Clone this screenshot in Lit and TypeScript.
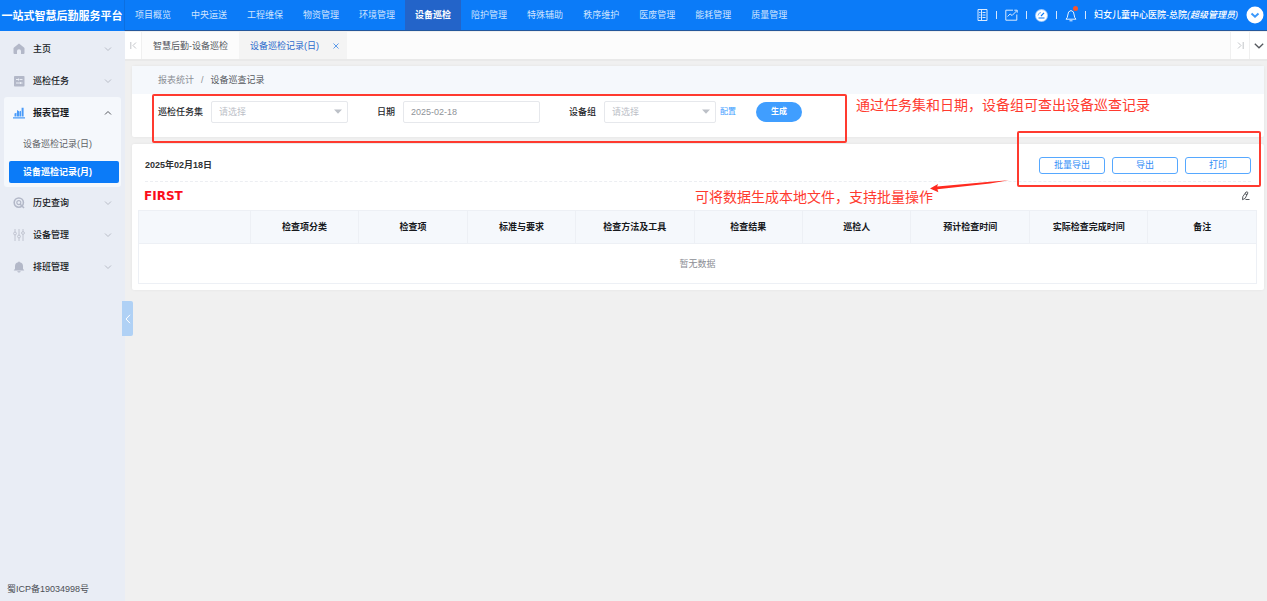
import { LitElement, html, css, svg, TemplateResult } from "lit";
import { customElement, state } from "lit/decorators.js";
import { classMap } from "lit/directives/class-map.js";

type MenuItem = { label: string; icon: string; children?: string[] };

const NAV = [
  "项目概览", "中央运送", "工程维保", "物资管理", "环境管理", "设备巡检",
  "陪护管理", "特殊辅助", "秩序维护", "医废管理", "能耗管理", "质量管理",
];

const MENU: MenuItem[] = [
  { label: "主页", icon: "home" },
  { label: "巡检任务", icon: "task" },
  { label: "报表管理", icon: "report", children: ["设备巡检记录(日)", "设备巡检记录(月)"] },
  { label: "历史查询", icon: "history" },
  { label: "设备管理", icon: "device" },
  { label: "排班管理", icon: "bell" },
];

const COLUMNS = [
  "", "检查项分类", "检查项", "标准与要求", "检查方法及工具",
  "检查结果", "巡检人", "预计检查时间", "实际检查完成时间", "备注",
];
const WIDE = new Set([4, 7, 8]);

const MENU_ICONS: Record<string, TemplateResult> = {
  home: svg`<path fill="#b3b8c8" d="M6 .6 11 4.400q.5.4.5 1V10q0 1-1 1H8V8q0-1.800-2-1.800T4 8v3H1.500q-1 0-1-1V5.400q0-.6.5-1z"/>`,
  task: svg`<rect x="1" y="1" width="10.500" height="10.500" rx=".8" fill="#b3b8c8"/><path stroke="#e9edf5" fill="none" d="M3 4.500h2.500M6.500 4.500h3M3 8h4M8 8h1.500M5.500 3.500v2M7.500 7v2"/>`,
  report: svg`<path fill="#4a9bf8" d="M0 10.200h12v1.200H0zM1.500 6.500l2-.8v3.800h-2zM4 3l2 1.200v5.300H4zM6.400 4.600 8 3.800v5.700H6.400zM8.600.8h2v8.700h-2z"/>`,
  history: svg`<circle cx="5.800" cy="5.600" r="4.600" fill="none" stroke="#b3b8c8" stroke-width="1.600"/><circle cx="5.800" cy="5.600" r="2" fill="none" stroke="#b3b8c8" stroke-width="1.200"/><path stroke="#b3b8c8" stroke-width="1.600" d="m7 7 4 4"/>`,
  device: svg`<g fill="none" stroke="#c0c4d0"><path d="M2 0v3M2 6v6M6 0v6M6 9v3M10 0v2.500M10 5.500V12"/><circle cx="2" cy="4.500" r="1.400"/><circle cx="6" cy="7.500" r="1.400"/><circle cx="10" cy="4" r="1.400"/></g>`,
  bell: svg`<path fill="#b3b8c8" d="M6 .5q.8 0 .8.7 3.200.7 3.200 4v2.600l1.300 1.700H.7L2 7.800V5.200q0-3.300 3.200-4 0-.7.8-.7M4.200 10.200h3.600q-.4 1.300-1.800 1.300t-1.800-1.300"/>`,
};

@customElement("app-root")
export class AppRoot extends LitElement {
  @state() private activeChild = "设备巡检记录(月)";

  static styles = css`
    :host {
      display: grid;
      grid-template: auto 1fr / 125px 1fr;
      min-height: 100vh;
      background: #f0f0f0;
      color: #303133;
      font: 9px/12px "Liberation Sans", "Noto Sans CJK SC", sans-serif;
    }
    * { box-sizing: border-box; }
    button, input, select { font: inherit; color: inherit; margin: 0; }
    button { cursor: pointer; border: 0; background: none; padding: 0; }
    a { text-decoration: none; color: inherit; }
    ul { list-style: none; margin: 0; padding: 0; }
    svg { display: block; flex: none; }

    .brand {
      display: flex; align-items: center; justify-content: center;
      height: 31px; margin: 0;
      background: #0b7bf8; color: #fff;
      font-size: 11px; font-weight: 700; white-space: nowrap;
      border-right: 1px solid #0c6fe0;
    }
    .topbar {
      display: flex; justify-content: space-between; height: 31px;
      background: #0b7bf8; border-bottom: 1px solid #25579b; color: #fff;
    }
    .nav { display: flex; }
    .nav a { display: flex; align-items: center; padding: 0 10px; color: #cfe4fe; white-space: nowrap; }
    .nav a.active { background: #2364c9; color: #fff; font-weight: 700; }
    .tools { display: flex; align-items: center; gap: 8px; padding-right: 3px; white-space: nowrap; }
    .tools .sep { width: 1px; height: 8px; background: #d5e7fe; }
    .user { font-weight: 500; }
    .alert { position: relative; }
    .alert::after {
      content: ""; position: absolute; top: -3px; right: -1px;
      width: 5px; height: 5px; border-radius: 50%; background: #f9552b;
    }

    .sidebar {
      position: relative; display: flex; flex-direction: column; justify-content: space-between;
      background: #e9edf5; padding: 2px 4px 6px;
    }
    .item {
      display: grid; grid-template-columns: 12px 1fr 8px; gap: 8px; align-items: center;
      width: 100%; height: 32px; padding: 0 9px; text-align: left; color: #17191d; font-weight: 500;
    }
    .group { background: #f5f8fc; border-radius: 3px; padding-bottom: 4px; }
    .group .item { font-weight: 700; }
    .children { display: grid; gap: 6px; padding: 4px 2px 0 5px; }
    .child {
      display: flex; align-items: center; height: 22px; padding-left: 14px;
      border-radius: 2px; color: #606266;
    }
    .child.active { background: #0b7bf8; color: #fff; font-weight: 700; }
    .icp { padding-left: 3px; color: #4c4f55; }
    .collapse {
      position: absolute; right: -8px; top: 270px; width: 11px; height: 35px;
      background: #b0d1f5; border-radius: 0 2px 2px 0;
      display: grid; place-items: center;
    }

    .tabs {
      display: flex; height: 29px; margin-top: 1px; background: #fcfcfc;
      border-bottom: 2px solid #e9e9e9; color: #55585e;
    }
    .edge { width: 17px; display: grid; place-items: center; background: #fff; border-right: 1px solid #f0f0f0; }
    .tab { display: flex; align-items: center; gap: 14px; padding: 0 11px; white-space: nowrap; }
    .tab.active { background: #f4f4f4; color: #2a69cc; padding-right: 8px; }
    .spring { flex: 1; border-right: 1px solid #f0f0f0; }
    .edge.next { width: 19px; }
    .edge.more { border-right: 0; }

    .main { min-width: 0; }
    .content { position: relative; display: grid; gap: 7px; padding: 5px 3px 7px 7px; }
    .card { background: #fff; border-radius: 2px; box-shadow: 0 0 3px rgb(0 0 0 / 6%); }
    .crumbs {
      display: flex; align-items: center; gap: 7px; height: 28px; padding-left: 26px;
      background: #f5f8fc; color: #8b8e94;
    }
    .crumbs b { color: #55585e; font-weight: 400; }
    .filters { display: flex; align-items: center; height: 43px; padding: 0 26px 8px; }
    .field { display: flex; align-items: center; gap: 8px; margin-right: 29px; white-space: nowrap; }
    .field label { color: #26282c; font-weight: 500; }
    .field.tight { margin-right: 4px; }
    .control {
      width: 137px; height: 22px; padding: 0 7px; border: 1px solid #e6e8ec; border-radius: 2px;
      background: #fff; color: #8f9399; appearance: none; outline: 0;
    }
    select.control { color: #bcc0c7; }
    .tight .control { width: 112px; }
    .select { display: grid; align-items: center; }
    .select > * { grid-area: 1 / 1; }
    .select svg { justify-self: end; margin-right: 6px; pointer-events: none; }
    .config { color: #409eff; font-size: 8px; margin-right: 20px; }
    .generate {
      width: 46px; height: 20px; border-radius: 10px; background: #409eff; color: #fff;
      font-size: 8px; font-weight: 700;
    }

    .result { padding: 0 7px 6px 6px; }
    .head {
      display: flex; align-items: center; justify-content: space-between;
      height: 38px; margin: 0 6px 0 7px; padding-top: 5px; border-bottom: 1px dashed #eceef2;
    }
    .head h2 { margin: 0; font-size: 9px; font-weight: 700; }
    .actions { display: flex; gap: 7px; }
    .actions button {
      width: 66px; height: 17px; line-height: 15px; border: 1px solid #56a8ff; border-radius: 3px; color: #2f8cf6; background: #fff;
    }
    .logo-row { display: flex; align-items: center; justify-content: space-between; height: 28px; padding: 0 7px 0 6px; }
    .logo { font: 700 12px/14px "DejaVu Sans", sans-serif; color: #fb0d1b; }
    table { width: 100%; border-collapse: collapse; table-layout: fixed; }
    th, td { border: 1px solid #edf0f5; padding: 0; text-align: center; }
    th { height: 33px; background: #f5f8fc; color: #17191d; font-weight: 700; width: 9.7%; }
    th:first-child { width: 10%; }
    th.wide { width: 10.6%; }
    td { height: 40px; color: #8b8e94; }

    .frame { position: absolute; border: 2px solid #ff3a2f; border-radius: 2px; pointer-events: none; }
    .frame.query { left: 27px; top: 33px; width: 695px; height: 49px; }
    .frame.export { right: 6px; top: 70px; width: 244px; height: 56px; }
    .note { position: absolute; margin: 0; font-size: 14px; line-height: 20px; color: #ff3a2f; white-space: nowrap; }
    .note.query { left: 731px; top: 34px; }
    .note.export { right: 334px; top: 126px; }
    .arrow { position: absolute; right: 258px; top: 119px; pointer-events: none; }
  `;

  private chevron(up = false) {
    return html`<svg width="8" height="6" viewBox="0 0 8 6" fill="none" stroke=${up ? "#55585e" : "#b9bdc8"}>
      <path d=${up ? "m1 4.500 3-3 3 3" : "m1 1.500 3 3 3-3"} /></svg>`;
  }

  private renderItem(item: MenuItem) {
    const row = html`<button class="item" aria-expanded=${item.children ? "true" : "false"}>
      <svg width="12" height="12" viewBox="0 0 12 12">${MENU_ICONS[item.icon]}</svg>
      <span>${item.label}</span>${this.chevron(!!item.children)}
    </button>`;
    if (!item.children) return html`<li>${row}</li>`;
    return html`<li class="group">${row}
      <ul class="children">${item.children.map((c) => html`<li>
        <a href="#" class=${classMap({ child: true, active: c === this.activeChild })}
          @click=${(e: Event) => { e.preventDefault(); this.activeChild = c; }}>${c}</a>
      </li>`)}</ul>
    </li>`;
  }

  private renderSelect(id: string) {
    return html`<span class="select">
      <select class="control" id=${id}><option>请选择</option></select>
      <svg width="8" height="5" viewBox="0 0 8 5"><path d="M0 .5h8L4 4.800z" fill="#bcc0c7" /></svg>
    </span>`;
  }

  render() {
    return html`
      <h1 class="brand">一站式智慧后勤服务平台</h1>
      <header class="topbar">
        <nav class="nav">
          ${NAV.map((n) => html`<a href="#" class=${classMap({ active: n === "设备巡检" })}>${n}</a>`)}
        </nav>
        <div class="tools">
          <svg width="11" height="12" viewBox="0 0 11 12" fill="none" stroke="#d9eafe">
            <path d="M1 .5h9v11H1zM4.500 1v10M2.200 3.500h1.300M2.200 6h1.300M2.200 8.500h1.300M5.500 3.500H8.500M5.500 6H8.500M5.500 8.500H8.500" />
          </svg>
          <i class="sep"></i>
          <svg width="13" height="12" viewBox="0 0 13 12" fill="none" stroke="#d9eafe">
            <path d="M8 1.200H.8v10h11V5.500M2.500 7.500l2.600-2.500 2 1.500 4.700-4.800M9.300 1.200h2.900v2.500" />
          </svg>
          <i class="sep"></i>
          <svg width="13" height="13" viewBox="0 0 13 13">
            <circle cx="6.500" cy="6.500" r="6.500" fill="#9fcbfd" /><circle cx="6.500" cy="6.500" r="5.500" fill="#fff" />
            <path d="M3.500 9h6M6 7l3-3.200" stroke="#0b7bf8" stroke-width="1.200" /><path d="M3 6.500q.4-2.800 3-3" stroke="#6fb0fb" fill="none" />
          </svg>
          <i class="sep"></i>
          <span class="alert"><svg width="12" height="13" viewBox="0 0 12 13" fill="none" stroke="#e6f1ff">
            <path d="M6 1.500q3.200.6 3.200 4.500 0 2.600 1.800 4.200H1Q2.800 8.600 2.800 6 2.800 2.100 6 1.500M4.500 11.800h3" />
          </svg></span>
          <i class="sep"></i>
          <span class="user">妇女儿童中心医院-总院<em>(超级管理员)</em></span>
          <button class="avatar" aria-label="账户"><svg width="18" height="18" viewBox="0 0 18 18">
            <circle cx="9" cy="9" r="8.500" fill="#fff" /><path d="m5.500 7.500 3.500 3.200 3.500-3.200" fill="none" stroke="#3a98fb" stroke-width="2" />
          </svg></button>
        </div>
      </header>

      <aside class="sidebar">
        <ul>${MENU.map((m) => this.renderItem(m))}</ul>
        <div class="icp">蜀ICP备19034998号</div>
        <button class="collapse" aria-label="收起">
          <svg width="6" height="10" viewBox="0 0 6 10" fill="none" stroke="#fff"><path d="M5 .8 1 5l4 4.200" /></svg>
        </button>
      </aside>

      <main class="main">
        <div class="tabs">
          <button class="edge" aria-label="向左"><svg width="7" height="7" viewBox="0 0 7 7" fill="none" stroke="#c3c5c9"><path d="M.8 0v7M6 .5l-3 3 3 3" /></svg></button>
          <button class="tab">智慧后勤-设备巡检</button>
          <button class="tab active">设备巡检记录(日)
            <svg width="6" height="6" viewBox="0 0 6 6" stroke="#5f9be8"><path d="m.5.5 5 5m0-5-5 5" /></svg>
          </button>
          <span class="spring"></span>
          <button class="edge next" aria-label="向右"><svg width="7" height="7" viewBox="0 0 7 7" fill="none" stroke="#c3c5c9"><path d="M6.200 0v7M1 .5l3 3-3 3" /></svg></button>
          <button class="edge more" aria-label="更多"><svg width="10" height="6" viewBox="0 0 10 6" fill="none" stroke="#55585e" stroke-width="1.300"><path d="m.8.8 4.200 4 4.200-4" /></svg></button>
        </div>

        <div class="content">
          <section class="card">
            <div class="crumbs"><a href="#">报表统计</a><span>/</span><b>设备巡查记录</b></div>
            <form class="filters">
              <div class="field"><label for="task">巡检任务集</label>${this.renderSelect("task")}</div>
              <div class="field"><label for="date">日期</label><input class="control" id="date" type="text" value="2025-02-18" /></div>
              <div class="field tight"><label for="group">设备组</label>${this.renderSelect("group")}</div>
              <a class="config" href="#">配置</a>
              <button class="generate" type="button">生成</button>
            </form>
          </section>

          <section class="card result">
            <div class="head">
              <h2>2025年02月18日</h2>
              <div class="actions"><button>批量导出</button><button>导出</button><button>打印</button></div>
            </div>
            <div class="logo-row">
              <span class="logo">FIRST</span>
              <button aria-label="编辑"><svg width="9" height="10" viewBox="0 0 9 10" fill="none" stroke="#44474d" stroke-width=".9">
                <path d="M5 1q1.200-.5 2 .7L4.200 7.300 1.500 8.700l.3-3zM4 2.700l2 1M4.500 8.500h4" />
              </svg></button>
            </div>
            <table>
              <thead><tr>${COLUMNS.map((c, i) => html`<th class=${classMap({ wide: WIDE.has(i) })}>${c}</th>`)}</tr></thead>
              <tbody><tr><td colspan="10">暂无数据</td></tr></tbody>
            </table>
          </section>

          <div class="frame query"></div>
          <p class="note query">通过任务集和日期，设备组可查出设备巡查记录</p>
          <div class="frame export"></div>
          <p class="note export">可将数据生成本地文件，支持批量操作</p>
          <svg class="arrow" width="79" height="14" viewBox="0 0 79 14"><path fill="#ff2a1f" d="M0 8.500 8 4l-.8 2.600L60 1.800 79 .3 60 3.400 7.400 9.200l1 3z" /></svg>
        </div>
      </main>
    `;
  }
}
